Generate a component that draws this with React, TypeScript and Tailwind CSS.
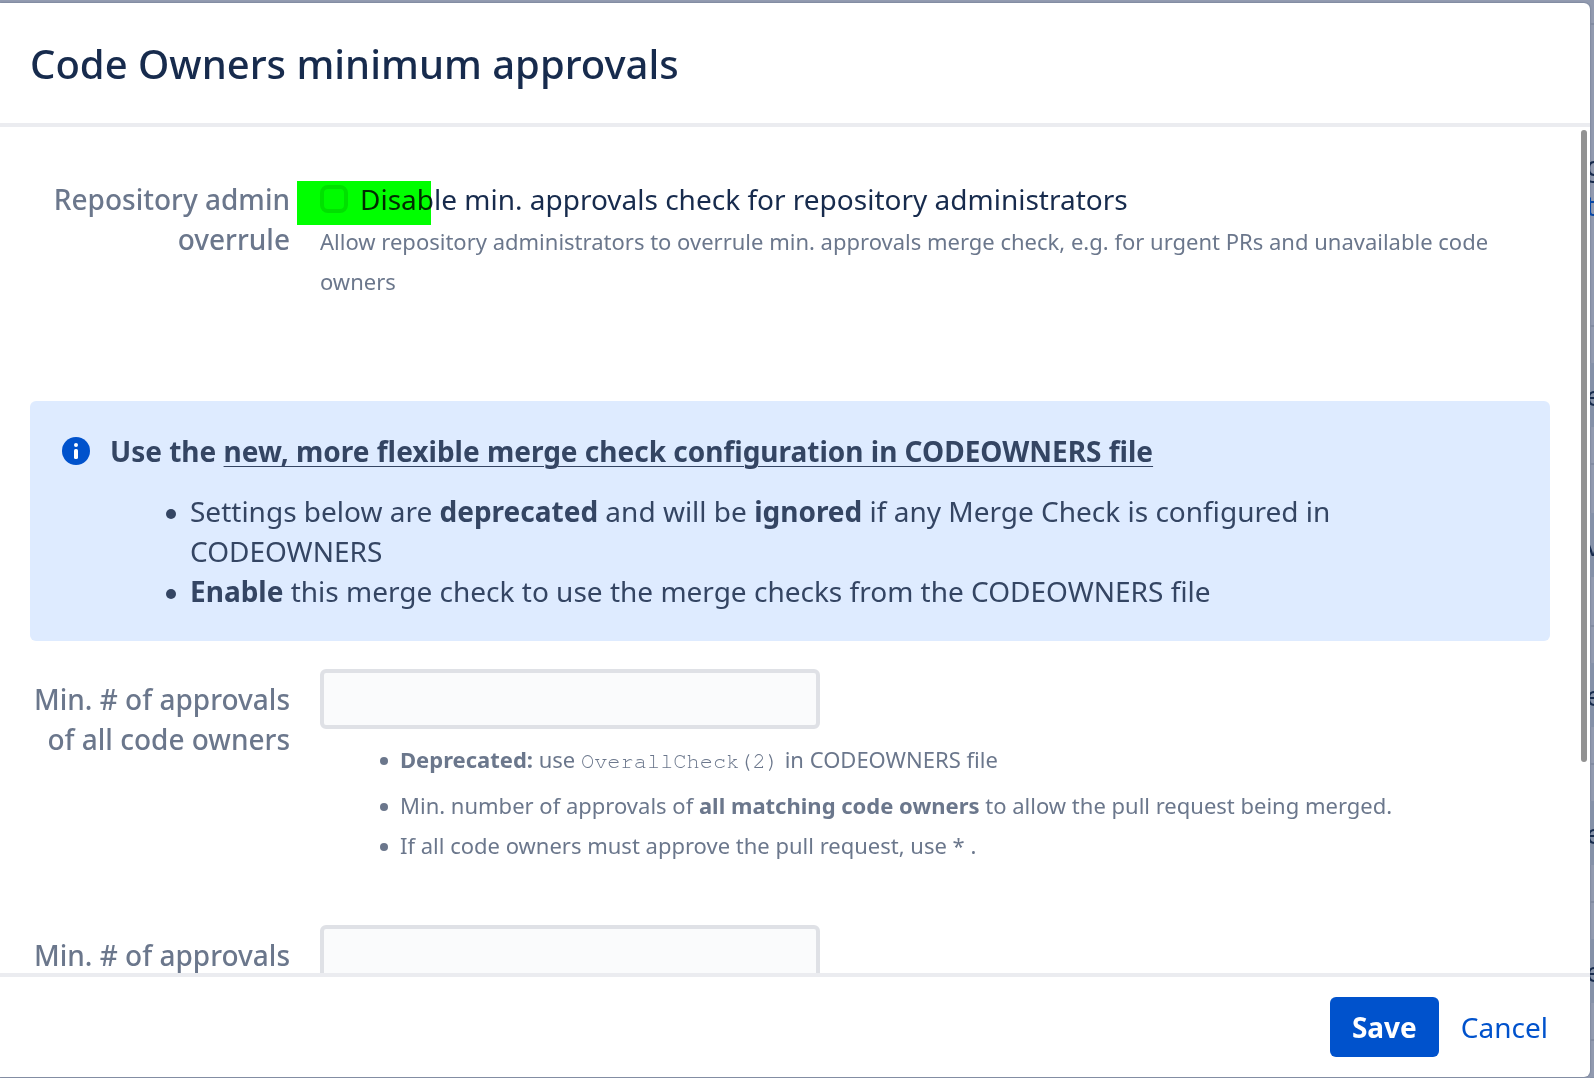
import React from "react";

function FieldRow({ label, htmlFor, children }: { label: string; htmlFor: string; children: React.ReactNode }) {
  return (
    <div className="flex gap-[30px]">
      <label htmlFor={htmlFor} className="w-[260px] shrink-0 pt-[10px] text-right font-medium text-[#6b778c]">
        {label}
      </label>
      <div className="min-w-0 flex-1">{children}</div>
    </div>
  );
}

function ApprovalsInput({ id }: { id: string }) {
  return (
    <input
      id={id}
      type="text"
      className="block h-[60px] w-full max-w-[500px] rounded-md border-4 border-[#dfe1e6] bg-[#fafbfc] px-3 text-[#172b4d] outline-none"
    />
  );
}

function NoticeItem({ children }: { children: React.ReactNode }) {
  return (
    <li className="relative before:absolute before:top-[18px] before:-left-6 before:size-[10px] before:rounded-full before:bg-[#344563]">
      {children}
    </li>
  );
}

function HintItem({ children }: { children: React.ReactNode }) {
  return (
    <li className="relative before:absolute before:top-[18px] before:-left-5 before:size-2 before:rounded-full before:bg-[#6b778c]">
      {children}
    </li>
  );
}

/* One row of the dimmed settings page that shows past the dialog's edge. */
function PageRow({ text, tall = false }: { text: string; tall?: boolean }) {
  return (
    <div className={tall ? "h-[162px] shrink-0 border-t-2 border-[#818ba1] pt-12" : "h-[138px] shrink-0 border-t-2 border-[#818ba1] pt-9"}>
      <div className="flex h-16 items-center bg-[#8591a8]">
        <span className="-ml-1">{text}</span>
      </div>
    </div>
  );
}

export default function App() {
  return (
    <div className="flex h-screen overflow-hidden bg-[#929bb0] font-['Noto_Sans',sans-serif] text-[28px] leading-[40px] text-[#172b4d]">
      <section role="dialog" aria-labelledby="title" className="mt-[3px] mb-px flex min-w-0 flex-1 flex-col rounded-r-md bg-white shadow-[0_0_2px_rgba(9,30,66,0.4)]">
        <header className="flex h-[124px] shrink-0 items-center border-b-4 border-[#ebecf0] px-[30px] pt-[2px]">
          <h2 id="title" className="text-[40px] leading-[48px] font-medium">Code Owners minimum approvals</h2>
        </header>
        <div className="relative min-h-0 flex-1 overflow-hidden">
          <div className="pt-[42px] pr-10 pl-[30px]">
            <FieldRow label="Repository admin overrule" htmlFor="overrule">
              <div className="relative flex items-center gap-3 pt-[10px]">
                <input id="overrule" type="checkbox" className="size-7 shrink-0 appearance-none rounded-lg border-4 border-[#dfe1e6] bg-[#fafbfc]" />
                <label htmlFor="overrule">Disable min. approvals check for repository administrators</label>
                <span className="pointer-events-none absolute top-3 -left-[23px] h-11 w-[134px] bg-[#00ff00] mix-blend-multiply" />
              </div>
              <p className="pt-[2px] text-[22px] leading-[40px] text-[#6b778c]">
                Allow repository administrators to overrule min. approvals merge check, e.g. for urgent PRs and unavailable code owners
              </p>
            </FieldRow>
            <div className="mt-[100px] flex gap-5 rounded-md bg-[#deebff] px-8 py-[30px] text-[#344563]">
              <svg viewBox="0 0 28 28" className="mt-[6px] size-7 shrink-0" aria-hidden="true">
                <circle cx="14" cy="14" r="14" fill="#0052cc" />
                <circle cx="14" cy="8" r="2" fill="#fff" />
                <rect x="12" y="12" width="4" height="10" rx="1.6" fill="#fff" />
              </svg>
              <div className="min-w-0 flex-1">
                <p className="font-bold">
                  Use the <a href="#codeowners" className="underline decoration-1 underline-offset-4">new, more flexible merge check configuration in CODEOWNERS file</a>
                </p>
                <ul className="mt-5 pr-10 pl-20">
                  <NoticeItem>Settings below are <b>deprecated</b> and will be <b>ignored</b> if any Merge Check is configured in CODEOWNERS</NoticeItem>
                  <NoticeItem><b>Enable</b> this merge check to use the merge checks from the CODEOWNERS file</NoticeItem>
                </ul>
              </div>
            </div>
            <div className="mt-7">
              <FieldRow label="Min. # of approvals of all code owners" htmlFor="all-owners">
                <ApprovalsInput id="all-owners" />
                <div className="mt-[10px] text-[22px] leading-[40px] text-[#6b778c]">
                  <ul className="pl-20">
                    <HintItem><b>Deprecated:</b> use <code className="font-['Courier_10_Pitch','Nimbus_Mono_PS','FreeMono','Liberation_Mono',monospace]">OverallCheck(2)</code> in CODEOWNERS file</HintItem>
                  </ul>
                  <ul className="mt-1 pl-20">
                    <HintItem>Min. number of approvals of <b>all matching code owners</b> to allow the pull request being merged.</HintItem>
                    <HintItem>If all code owners must approve the pull request, use * .</HintItem>
                  </ul>
                </div>
              </FieldRow>
            </div>
            <div className="mt-[60px]">
              <FieldRow label="Min. # of approvals of each code owner" htmlFor="each-owner">
                <ApprovalsInput id="each-owner" />
              </FieldRow>
            </div>
          </div>
          <div className="absolute top-[3px] right-[3px] h-[632px] w-[6px] rounded-full bg-[#929292]" />
        </div>
        <footer className="flex h-[104px] shrink-0 items-center justify-end border-t-4 border-[#ebecf0] pr-[42px]">
          <button type="button" className="h-[60px] rounded-md bg-[#0052cc] px-[22px] font-bold text-white">Save</button>
          <button type="button" className="ml-[22px] text-[#0052cc]">Cancel</button>
        </footer>
      </section>
      <aside aria-hidden="true" className="flex w-1 shrink-0 flex-col overflow-hidden pt-[23px]">
        <div className="h-[302px] shrink-0 border-t-2 border-[#818ba1] pt-[120px]">
          <span className="-ml-1 block">g</span>
          <span className="-ml-1 block text-[#0747a6]">t</span>
        </div>
        <PageRow text="e" />
        <PageRow text="v" tall />
        <PageRow text="e" />
        <PageRow text="e" />
        <PageRow text="e" />
        <PageRow text="" />
      </aside>
    </div>
  );
}
